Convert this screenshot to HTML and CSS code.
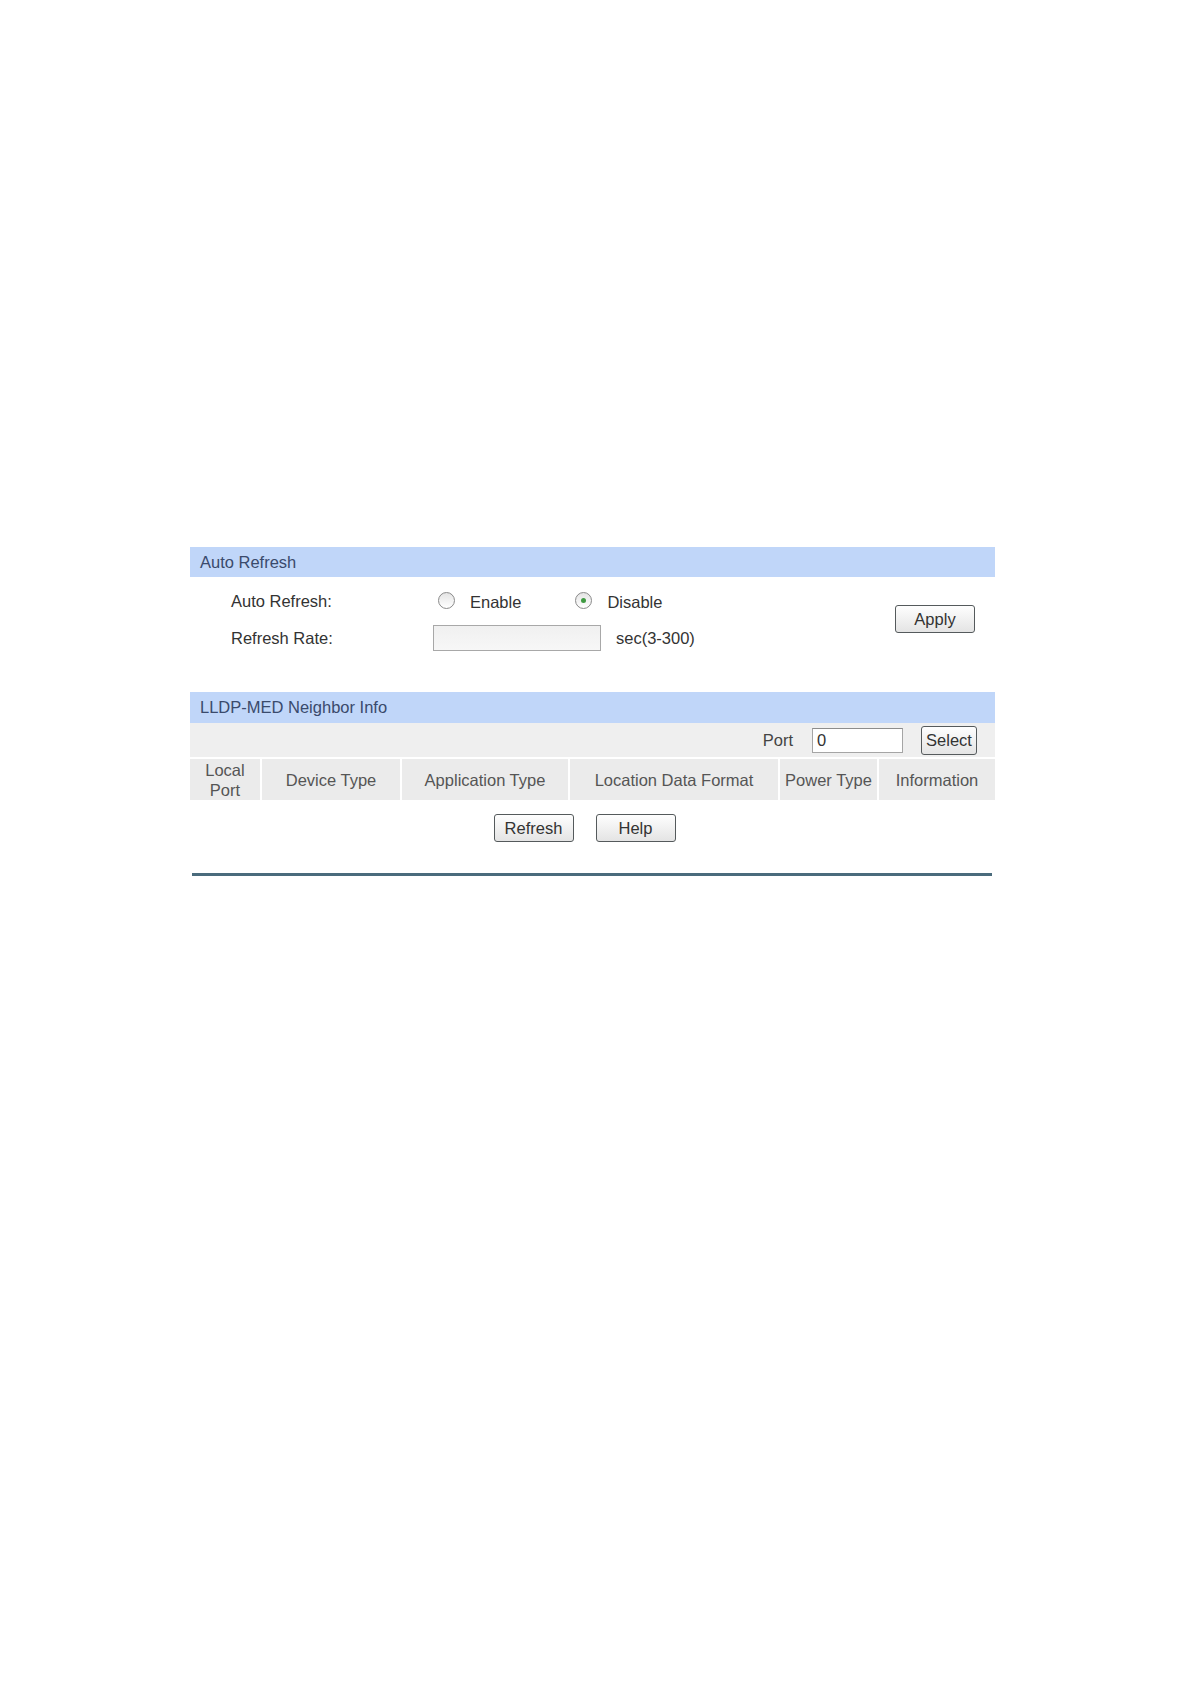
FILE: index.html
```html
<!DOCTYPE html>
<html>
<head>
<meta charset="utf-8">
<link rel="stylesheet" href="styles.css">
</head>
<body>
<div class="page">
  <div class="panel">
    <div class="bar">Auto Refresh</div>
    <div class="form">
      <div class="rows">
        <div class="row row1">
          <div class="label">Auto Refresh:</div>
          <div class="field radios">
            <label class="opt"><span class="radio"></span><span class="opt-text">Enable</span></label>
            <label class="opt opt2"><span class="radio checked"></span><span class="opt-text">Disable</span></label>
          </div>
        </div>
        <div class="row row2">
          <div class="label">Refresh Rate:</div>
          <div class="field">
            <span class="rate-input"></span>
            <span class="hint">sec(3-300)</span>
          </div>
        </div>
      </div>
      <button class="btn apply">Apply</button>
    </div>

    <div class="bar bar2">LLDP-MED Neighbor Info</div>
    <div class="filter">
      <span class="port-label">Port</span>
      <span class="port-input">0</span>
      <button class="btn select">Select</button>
    </div>
    <div class="thead">
      <div class="th">Local<br>Port</div>
      <div class="th">Device Type</div>
      <div class="th">Application Type</div>
      <div class="th">Location Data Format</div>
      <div class="th">Power Type</div>
      <div class="th">Information</div>
    </div>
    <div class="actions">
      <button class="btn act">Refresh</button>
      <button class="btn act">Help</button>
    </div>
    <div class="rule"></div>
  </div>
</div>
</body>
</html>
```
FILE: styles.css
```css
html, body {
  margin: 0;
  padding: 0;
  background: #ffffff;
}
body {
  font-family: "Liberation Sans", Arial, sans-serif;
  font-size: 16.5px;
  color: #333333;
}
.page {
  padding-top: 547px;
  padding-left: 190px;
}
.panel {
  width: 805px;
}
.bar {
  height: 30px;
  line-height: 30px;
  background: #c0d6f9;
  color: #3a4a6c;
  padding-left: 10px;
  font-size: 16.5px;
}
.bar2 {
  height: 31px;
  line-height: 31px;
}
.form {
  display: flex;
  justify-content: space-between;
  height: 115px;
}
.rows {
  display: flex;
  flex-direction: column;
  padding-top: 10px;
}
.row {
  display: flex;
  align-items: center;
}
.row1 {
  height: 28px;
}
.row2 {
  height: 34px;
  margin-top: 6px;
}
.label {
  width: 202px;
  padding-left: 41px;
}
.field {
  display: flex;
  align-items: center;
}
.radios {
  padding-left: 5px;
  padding-top: 3px;
}
.opt {
  display: flex;
  align-items: center;
}
.opt2 {
  margin-left: 54px;
}
.radio {
  width: 15px;
  height: 15px;
  border: 1px solid #8a8a8a;
  border-radius: 50%;
  background: linear-gradient(#e4e4e4, #ffffff);
  position: relative;
  margin-top: -4px;
}
.radio.checked::after {
  content: "";
  position: absolute;
  left: 5px;
  top: 5px;
  width: 5px;
  height: 5px;
  border-radius: 50%;
  background: #3f9a42;
}
.opt-text {
  margin-left: 15px;
}
.rate-input {
  display: block;
  width: 166px;
  height: 24px;
  border: 1px solid #a8a8a8;
  background: linear-gradient(#f0f0f0, #f7f7f7);
}
.hint {
  margin-left: 15px;
}
.btn {
  font-family: "Liberation Sans", Arial, sans-serif;
  font-size: 16.5px;
  color: #333333;
  border: 1px solid #555a5c;
  border-radius: 3px;
  background: linear-gradient(#fefefe, #e4e4e4);
  padding: 0;
  margin: 0;
}
.apply {
  width: 80px;
  height: 28px;
  margin-top: 28px;
  margin-right: 20px;
}
.filter {
  height: 34px;
  background: #efefef;
  display: flex;
  align-items: center;
  justify-content: flex-end;
  padding-right: 18px;
  border-bottom: 2px solid #ffffff;
}
.port-label {
  color: #444;
}
.port-input {
  display: block;
  margin-left: 19px;
  width: 85px;
  height: 23px;
  line-height: 23px;
  border: 1px solid #a5a5a5;
  border-top-color: #8c8c8c;
  background: #ffffff;
  padding-left: 4px;
  color: #333;
}
.select {
  margin-left: 18px;
  width: 56px;
  height: 29px;
}
.thead {
  display: grid;
  grid-template-columns: 70px 138px 166px 208px 97px 116px;
  column-gap: 2px;
  background: #ffffff;
  height: 41px;
}
.th {
  background: #ebebeb;
  color: #555555;
  display: flex;
  align-items: center;
  justify-content: center;
  text-align: center;
  line-height: 20px;
}
.actions {
  display: flex;
  justify-content: center;
  gap: 22px;
  margin-top: 14px;
  padding-right: 16px;
}
.act {
  width: 80px;
  height: 28px;
}
.rule {
  margin-top: 31px;
  margin-left: 2px;
  width: 800px;
  height: 3px;
  background: #4a6b7c;
}
```
